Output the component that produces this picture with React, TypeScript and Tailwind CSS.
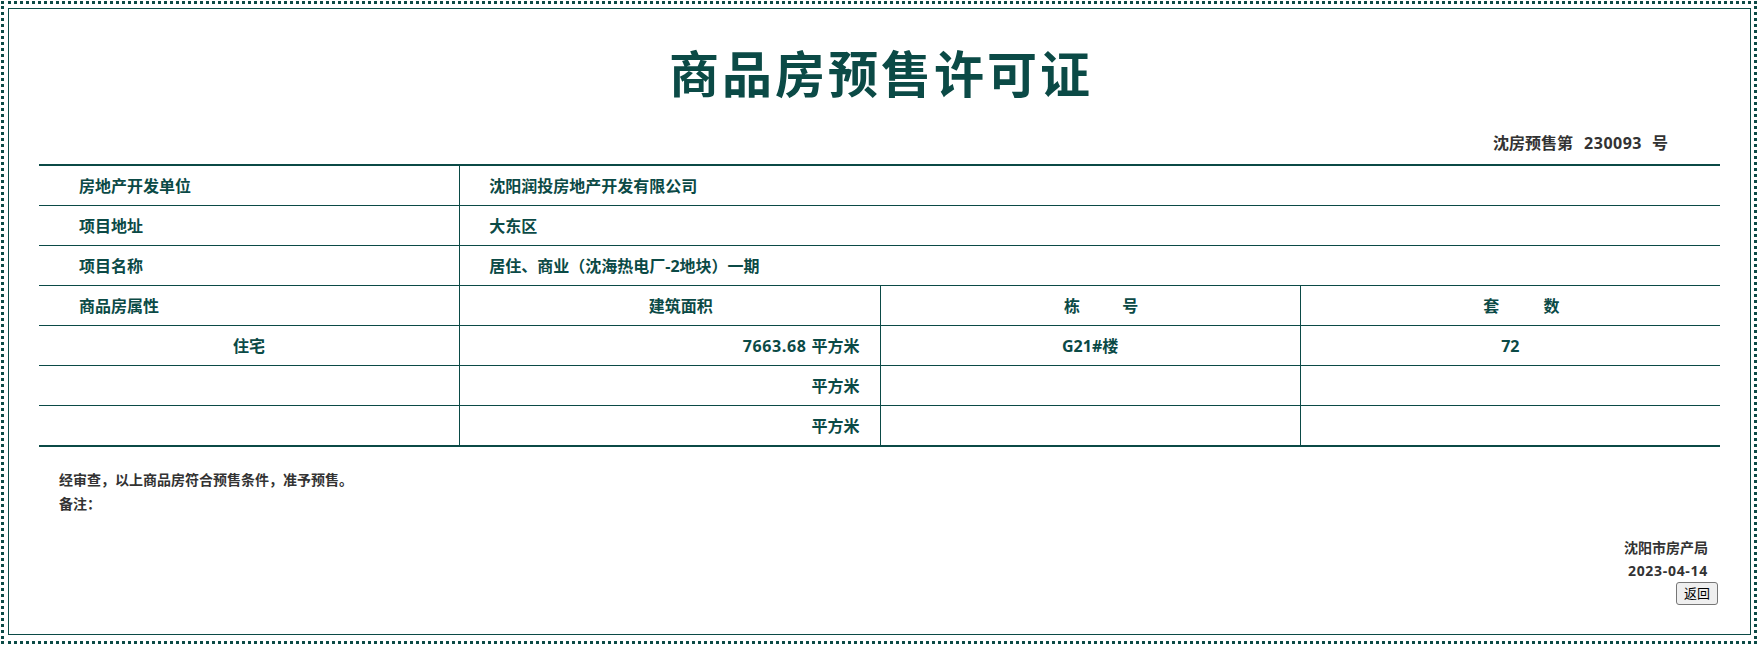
const teal = "text-[#0b4a46]";

const InfoRow = ({ label, value }: { label: string; value: string }) => (
  <div className="grid h-[40px] grid-cols-4 border-b border-[#0b4a46]">
    <div className="flex items-center pl-[40px]">{label}</div>
    <div className="col-span-3 flex items-center border-l border-[#0b4a46] pl-[29px]">{value}</div>
  </div>
);

const AreaRow = ({
  kind,
  area,
  building,
  count,
  last,
}: {
  kind?: string;
  area?: string;
  building?: string;
  count?: string;
  last?: boolean;
}) => (
  <div
    className={
      last
        ? "grid h-[41px] grid-cols-4 border-b-2 border-[#0b4a46]"
        : "grid h-[40px] grid-cols-4 border-b border-[#0b4a46]"
    }
  >
    <div className="flex items-center justify-center">{kind}</div>
    <div className="flex items-center justify-end border-l border-[#0b4a46] pr-[20px]">
      {area && <span className="mr-[5px] tracking-[0.6px]">{area}</span>}
      平方米
    </div>
    <div className="flex items-center justify-center border-l border-[#0b4a46]">{building}</div>
    <div className="flex items-center justify-center border-l border-[#0b4a46]">{count}</div>
  </div>
);

export default function App() {
  return (
    <div
      className="h-[648px] w-[1760px] bg-white pl-[1px] pt-[1px]"
      style={{ fontFamily: '"Open Sans", "Noto Sans CJK SC", sans-serif' }}
    >
      <div className="h-[643px] w-[1756px] border-[3px] border-dotted border-[#0b4a46] pb-[6px] pl-[4px] pr-[3px] pt-[4px]">
        <div className="h-full w-full border border-[#0b4a46]">
          {/* 标题 */}
          <h1
            className={`mt-[41px] h-[48px] pl-[3px] text-center text-[50px] font-bold leading-[48px] tracking-[3px] ${teal}`}
          >
            商品房预售许可证
          </h1>

          <div className="mt-[35px] flex h-[20px] justify-end pr-[82px] text-[16px] font-bold leading-[20px] text-[#333]">
            <span>沈房预售第</span>
            <span className="ml-[11px] mr-[10px] tracking-[0.5px]">230093</span>
            <span>号</span>
          </div>

          {/* 表格 */}
          <div className={`mx-[30px] mt-[11px] border-t-2 border-[#0b4a46] text-[16px] font-bold ${teal}`}>
            <InfoRow label="房地产开发单位" value="沈阳润投房地产开发有限公司" />
            <InfoRow label="项目地址" value="大东区" />
            <InfoRow label="项目名称" value="居住、商业（沈海热电厂-2地块）一期" />
            <div className="grid h-[40px] grid-cols-4 border-b border-[#0b4a46]">
              <div className="flex items-center pl-[40px]">商品房属性</div>
              <div className="flex items-center justify-center border-l border-[#0b4a46] pl-[22px]">建筑面积</div>
              <div className="flex items-center justify-center border-l border-[#0b4a46] pl-[22px]">
                <span>栋</span>
                <span className="ml-[42px]">号</span>
              </div>
              <div className="flex items-center justify-center border-l border-[#0b4a46] pl-[22px]">
                <span>套</span>
                <span className="ml-[44px]">数</span>
              </div>
            </div>
            <AreaRow kind="住宅" area="7663.68" building="G21#楼" count="72" />
            <AreaRow />
            <AreaRow last />
          </div>

          {/* 说明 */}
          <div className="mt-[21px] pl-[50px] text-[14px] font-bold leading-[24px] text-[#333]">
            <div>经审查，以上商品房符合预售条件，准予预售。</div>
            <div>备注：</div>
          </div>

          <div className="mt-[20px] pr-[42px] text-right text-[14px] font-bold leading-[23px] text-[#333]">
            <div>沈阳市房产局</div>
            <div className="tracking-[0.7px]">2023-04-14</div>
          </div>
          <div className="flex justify-end pr-[32px]">
            <button className="h-[23px] w-[42px] rounded-[3px] border border-[#767676] bg-[#efefef] text-[13px] leading-[21px] text-black">
              返回
            </button>
          </div>
        </div>
      </div>
    </div>
  );
}
